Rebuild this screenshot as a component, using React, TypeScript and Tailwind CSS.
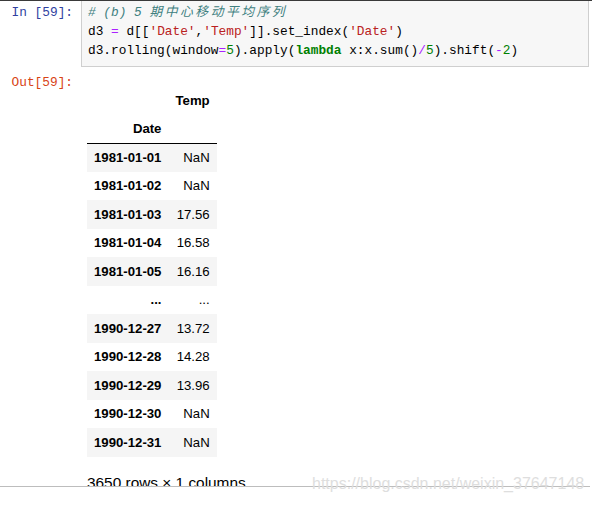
import React from 'react'

const mono = { fontFamily: '"Liberation Mono", "Noto Sans CJK SC", monospace' }

const rows: [string, string][] = [
  ['1981-01-01', 'NaN'],
  ['1981-01-02', 'NaN'],
  ['1981-01-03', '17.56'],
  ['1981-01-04', '16.58'],
  ['1981-01-05', '16.16'],
  ['...', '...'],
  ['1990-12-27', '13.72'],
  ['1990-12-28', '14.28'],
  ['1990-12-29', '13.96'],
  ['1990-12-30', 'NaN'],
  ['1990-12-31', 'NaN'],
]

const Eq = ({ c }: { c: string }) => <span className="text-[#aa22ff]">{c}</span>
const Str = ({ c }: { c: string }) => <span className="text-[#ba2121]">{c}</span>
const Num = ({ c }: { c: string }) => <span className="text-[#008000]">{c}</span>

export default function App() {
  return (
    <div className="relative w-[592px] h-[505px] overflow-hidden bg-white">
      <div className="h-[486px] overflow-hidden">
        <div className="h-px bg-[#3a3a3a]" />

        {/* input cell */}
        <div className="flex">
          <div
            className="w-[81px] shrink-0 pr-[8px] pt-[2px] text-right text-[12.8px] leading-[19px] text-[#303f9f]"
            style={mono}
          >
            In [59]:
          </div>
          <div
            className="flex-1 mr-[3px] border border-t-0 border-[#cfcfcf] bg-[#f7f7f7] px-[6px] pt-[2px] pb-[6px] text-[12.8px] leading-[19px] text-black whitespace-pre"
            style={mono}
          >
            <div className="italic text-[#408080]">
              # (b) 5 <span className="tracking-[2.5px]">期中心移动平均序列</span>
            </div>
            <div>
              d3 <Eq c="=" /> d[[<Str c="'Date'" />,<Str c="'Temp'" />]].set_index(
              <Str c="'Date'" />)
            </div>
            <div>
              d3.rolling(window<Eq c="=" />
              <Num c="5" />).apply(<span className="font-bold text-[#008000]">lambda</span> x:x.sum()
              <Eq c="/" />
              <Num c="5" />).shift(<Eq c="-" />
              <Num c="2" />)
            </div>
          </div>
        </div>

        {/* output cell */}
        <div className="flex mt-[6px]">
          <div
            className="w-[81px] shrink-0 pr-[8px] text-right text-[12.8px] leading-[19px] text-[#d84315]"
            style={mono}
          >
            Out[59]:
          </div>
          <div
            className="pl-[6px] pt-[13px] text-black"
            style={{ fontFamily: '"Liberation Sans", Arial, sans-serif' }}
          >
            <table className="border-collapse text-[13.2px] leading-none">
              <thead>
                <tr className="h-[28.5px]">
                  <th className="px-[7px]" />
                  <th className="px-[7px] text-right font-bold">Temp</th>
                </tr>
                <tr className="h-[28.5px] border-b border-black">
                  <th className="px-[7px] text-right font-bold">Date</th>
                  <th className="px-[7px]" />
                </tr>
              </thead>
              <tbody>
                {rows.map(([d, v], i) => (
                  <tr key={d + i} className={`h-[28.5px] ${i % 2 === 0 ? 'bg-[#f5f5f5]' : 'bg-white'}`}>
                    <th className="px-[7px] text-right font-bold">{d}</th>
                    <td className="px-[7px] text-right">{v}</td>
                  </tr>
                ))}
              </tbody>
            </table>
            <p className="mt-[16px] text-[15.4px] leading-[20px]">3650 rows × 1 columns</p>
          </div>
        </div>
      </div>
      <div className="mr-[2px] h-px bg-[#bdbdbd]" />

      <div
        className="absolute left-[312px] top-[476px] text-[16px] leading-none text-[#dedede]"
        style={{ fontFamily: '"Liberation Sans", Arial, sans-serif' }}
      >
        https://blog.csdn.net/weixin_37647148
      </div>
    </div>
  )
}
